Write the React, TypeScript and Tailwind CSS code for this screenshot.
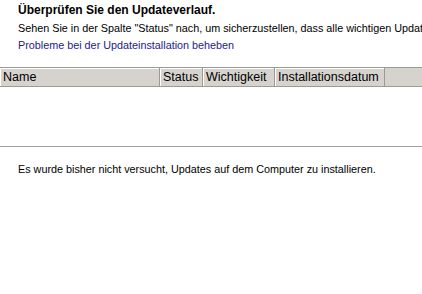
function HeaderCell({ label, className }: { label?: string; className: string }) {
  return (
    <div
      className={`flex h-full items-center border-r border-[#9d9a93] pl-[3px] text-[12.5px] text-black shadow-[inset_1px_1px_0_#ffffff] ${className}`}
    >
      {label}
    </div>
  )
}

export default function App() {
  return (
    <div
      className="h-[294px] w-[422px] overflow-hidden bg-white text-[10.8px] text-black"
      style={{ fontFamily: 'Tahoma, "Liberation Sans", sans-serif' }}
    >
      <div className="whitespace-nowrap pl-[18px] pt-[1px]">
        <div className="h-[18px] text-[12px] font-bold leading-[18px]">Überprüfen Sie den Updateverlauf.</div>
        <div className="h-[18px] leading-[18px]">
          Sehen Sie in der Spalte "Status" nach, um sicherzustellen, dass alle wichtigen Updates erfolgreich installiert wurden.
        </div>
        <div className="h-[17px] leading-[17px] text-[#1c1c8c]">Probleme bei der Updateinstallation beheben</div>
      </div>
      <div className="mt-[13px] flex h-[20px] border-y border-[#9d9a93] bg-[#d6d3ce]">
        <HeaderCell label="Name" className="w-[160px]" />
        <HeaderCell label="Status" className="w-[43px]" />
        <HeaderCell label="Wichtigkeit" className="w-[72px]" />
        <HeaderCell label="Installationsdatum" className="w-[110px]" />
        <div className="flex-1" />
      </div>
      <div className="h-[59px]" />
      <div className="h-px bg-[#a0a0a0]" />
      <div className="whitespace-nowrap pl-[18px] pt-[15px] leading-[14px]">
        Es wurde bisher nicht versucht, Updates auf dem Computer zu installieren.
      </div>
    </div>
  )
}
